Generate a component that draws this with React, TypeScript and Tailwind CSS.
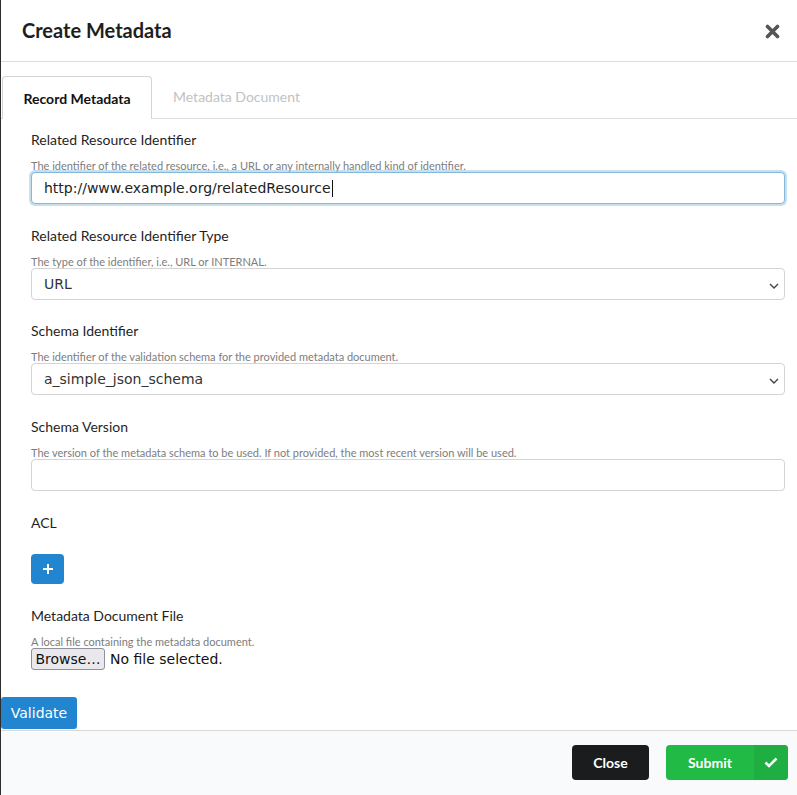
import React from "react"

const lato = "font-['Lato','Liberation_Sans',sans-serif]"
const sys = "font-['DejaVu_Sans','Liberation_Sans',sans-serif]"

const Label = ({ children }: { children: React.ReactNode }) => (
  <div className={`${lato} text-[14px] leading-[20px] text-[#1f1f1f]`}>{children}</div>
)

const Help = ({ children }: { children: React.ReactNode }) => (
  <div className={`${lato} text-[11px] leading-[13px] text-[#7d7d7d] mt-[9px]`}>{children}</div>
)

const Chevron = () => (
  <svg width="10" height="6" viewBox="0 0 10 6" className="absolute right-[5px] top-[14px]">
    <path d="M1 1l4 4 4-4" fill="none" stroke="#444" strokeWidth="1.4" />
  </svg>
)

const SelectBox = ({ value }: { value: string }) => (
  <div className="relative h-[32px] rounded-[4px] border border-[#d4d4d5] bg-white flex items-center pl-[12px]">
    <span className={`${sys} text-[14px] text-[#333]`}>{value}</span>
    <Chevron />
  </div>
)

export default function App() {
  return (
    <div className="w-[797px] h-[795px] bg-white border-l border-[#2d2d2d] flex flex-col overflow-hidden">
      <div className="h-[62px] shrink-0 border-b border-[#dcdcdd] flex items-center justify-between pl-[21px] pr-[17px]">
        <h1 className={`${lato} text-[20px] font-bold text-[#1e1e1e] -mt-[1px]`}>Create Metadata</h1>
        <svg width="15" height="15" viewBox="0 0 15 15" className="mt-[2px]">
          <path d="M2.5 2.5l10 10M12.5 2.5l-10 10" stroke="#555" strokeWidth="3.6" strokeLinecap="round" />
        </svg>
      </div>

      <div className="h-[57px] shrink-0 border-b border-[#dcdcdd] flex items-end pl-[1px] pt-[14px]">
        <div className="h-[43px] w-[150px] -mb-[1px] rounded-t-[4px] border border-b-0 border-[#d4d4d5] bg-white flex items-center justify-center">
          <span className={`${lato} text-[14px] font-bold text-[#111]`}>Record Metadata</span>
        </div>
        <div className="h-[43px] flex items-center pl-[21px]">
          <span className={`${lato} text-[14px] text-[#c2c2c2]`}>Metadata Document</span>
        </div>
      </div>

      <div className="flex-1 flex flex-col pl-[30px] pr-[12px] pt-[11px]">
        <Label>Related Resource Identifier</Label>
        <Help>The identifier of the related resource, i.e., a URL or any internally handled kind of identifier.</Help>
        <div className="h-[32px] rounded-[4px] border border-[#85b7d9] shadow-[0_0_0_2px_rgba(133,183,217,0.45)] bg-white flex items-center pl-[12px]">
          <span className={`${sys} text-[14px] text-[#222]`}>http://www.example.org/relatedResource</span>
          <span className="w-px h-[17px] bg-[#111] ml-[1px]" />
        </div>

        <div className="mt-[22px]">
          <Label>Related Resource Identifier Type</Label>
        </div>
        <Help>The type of the identifier, i.e., URL or INTERNAL.</Help>
        <SelectBox value="URL" />

        <div className="mt-[21px]">
          <Label>Schema Identifier</Label>
        </div>
        <Help>The identifier of the validation schema for the provided metadata document.</Help>
        <SelectBox value="a_simple_json_schema" />

        <div className="mt-[22px]">
          <Label>Schema Version</Label>
        </div>
        <Help>The version of the metadata schema to be used. If not provided, the most recent version will be used.</Help>
        <div className="h-[32px] rounded-[4px] border border-[#d4d4d5] bg-white" />

        <div className="mt-[22px]">
          <Label>ACL</Label>
        </div>
        <div className="mt-[21px] h-[30px] w-[33px] rounded-[4px] bg-[#2185d0] flex items-center justify-center">
          <svg width="12" height="12" viewBox="0 0 12 12">
            <path d="M6 1v10M1 6h10" stroke="#fff" strokeWidth="2" />
          </svg>
        </div>

        <div className="mt-[22px]">
          <Label>Metadata Document File</Label>
        </div>
        <div className={`${lato} text-[11px] leading-[13px] text-[#7d7d7d] mt-[9px]`}>A local file containing the metadata document.</div>
        <div className="flex items-center">
          <div className={`${sys} h-[22px] w-[74px] rounded-[3px] border border-[#8f8f9d] bg-[#e9e9ed] text-[14px] text-[#111] flex items-center justify-center`}>
            Browse…
          </div>
          <span className={`${sys} text-[14px] text-[#111] ml-[5px]`}>No file selected.</span>
        </div>
      </div>

      <div className="h-[33px] shrink-0 flex items-start">
        <div className={`${sys} h-[32px] w-[76px] rounded-[3px] bg-[#2185d0] text-white text-[14px] flex items-center justify-center`}>
          Validate
        </div>
      </div>

      <div className="h-[65px] shrink-0 border-t border-[#d9d9da] bg-[#f9fafb] flex items-center justify-end pr-[9px] pb-[1px]">
        <button className={`${lato} h-[35px] w-[77px] rounded-[4px] bg-[#1b1c1d] text-white text-[14px] font-bold`}>Close</button>
        <div className="ml-[17px] h-[35px] w-[122px] rounded-[4px] bg-[#21ba45] flex overflow-hidden">
          <span className={`${lato} flex-1 flex items-center justify-center text-white text-[14px] font-bold`}>Submit</span>
          <span className="w-[34px] bg-[#1fae41] flex items-center justify-center">
            <svg width="14" height="11" viewBox="0 0 14 11">
              <path d="M1.5 5.5l3.5 3.5 7.5-7.5" fill="none" stroke="#fff" strokeWidth="2.6" />
            </svg>
          </span>
        </div>
      </div>
    </div>
  )
}
